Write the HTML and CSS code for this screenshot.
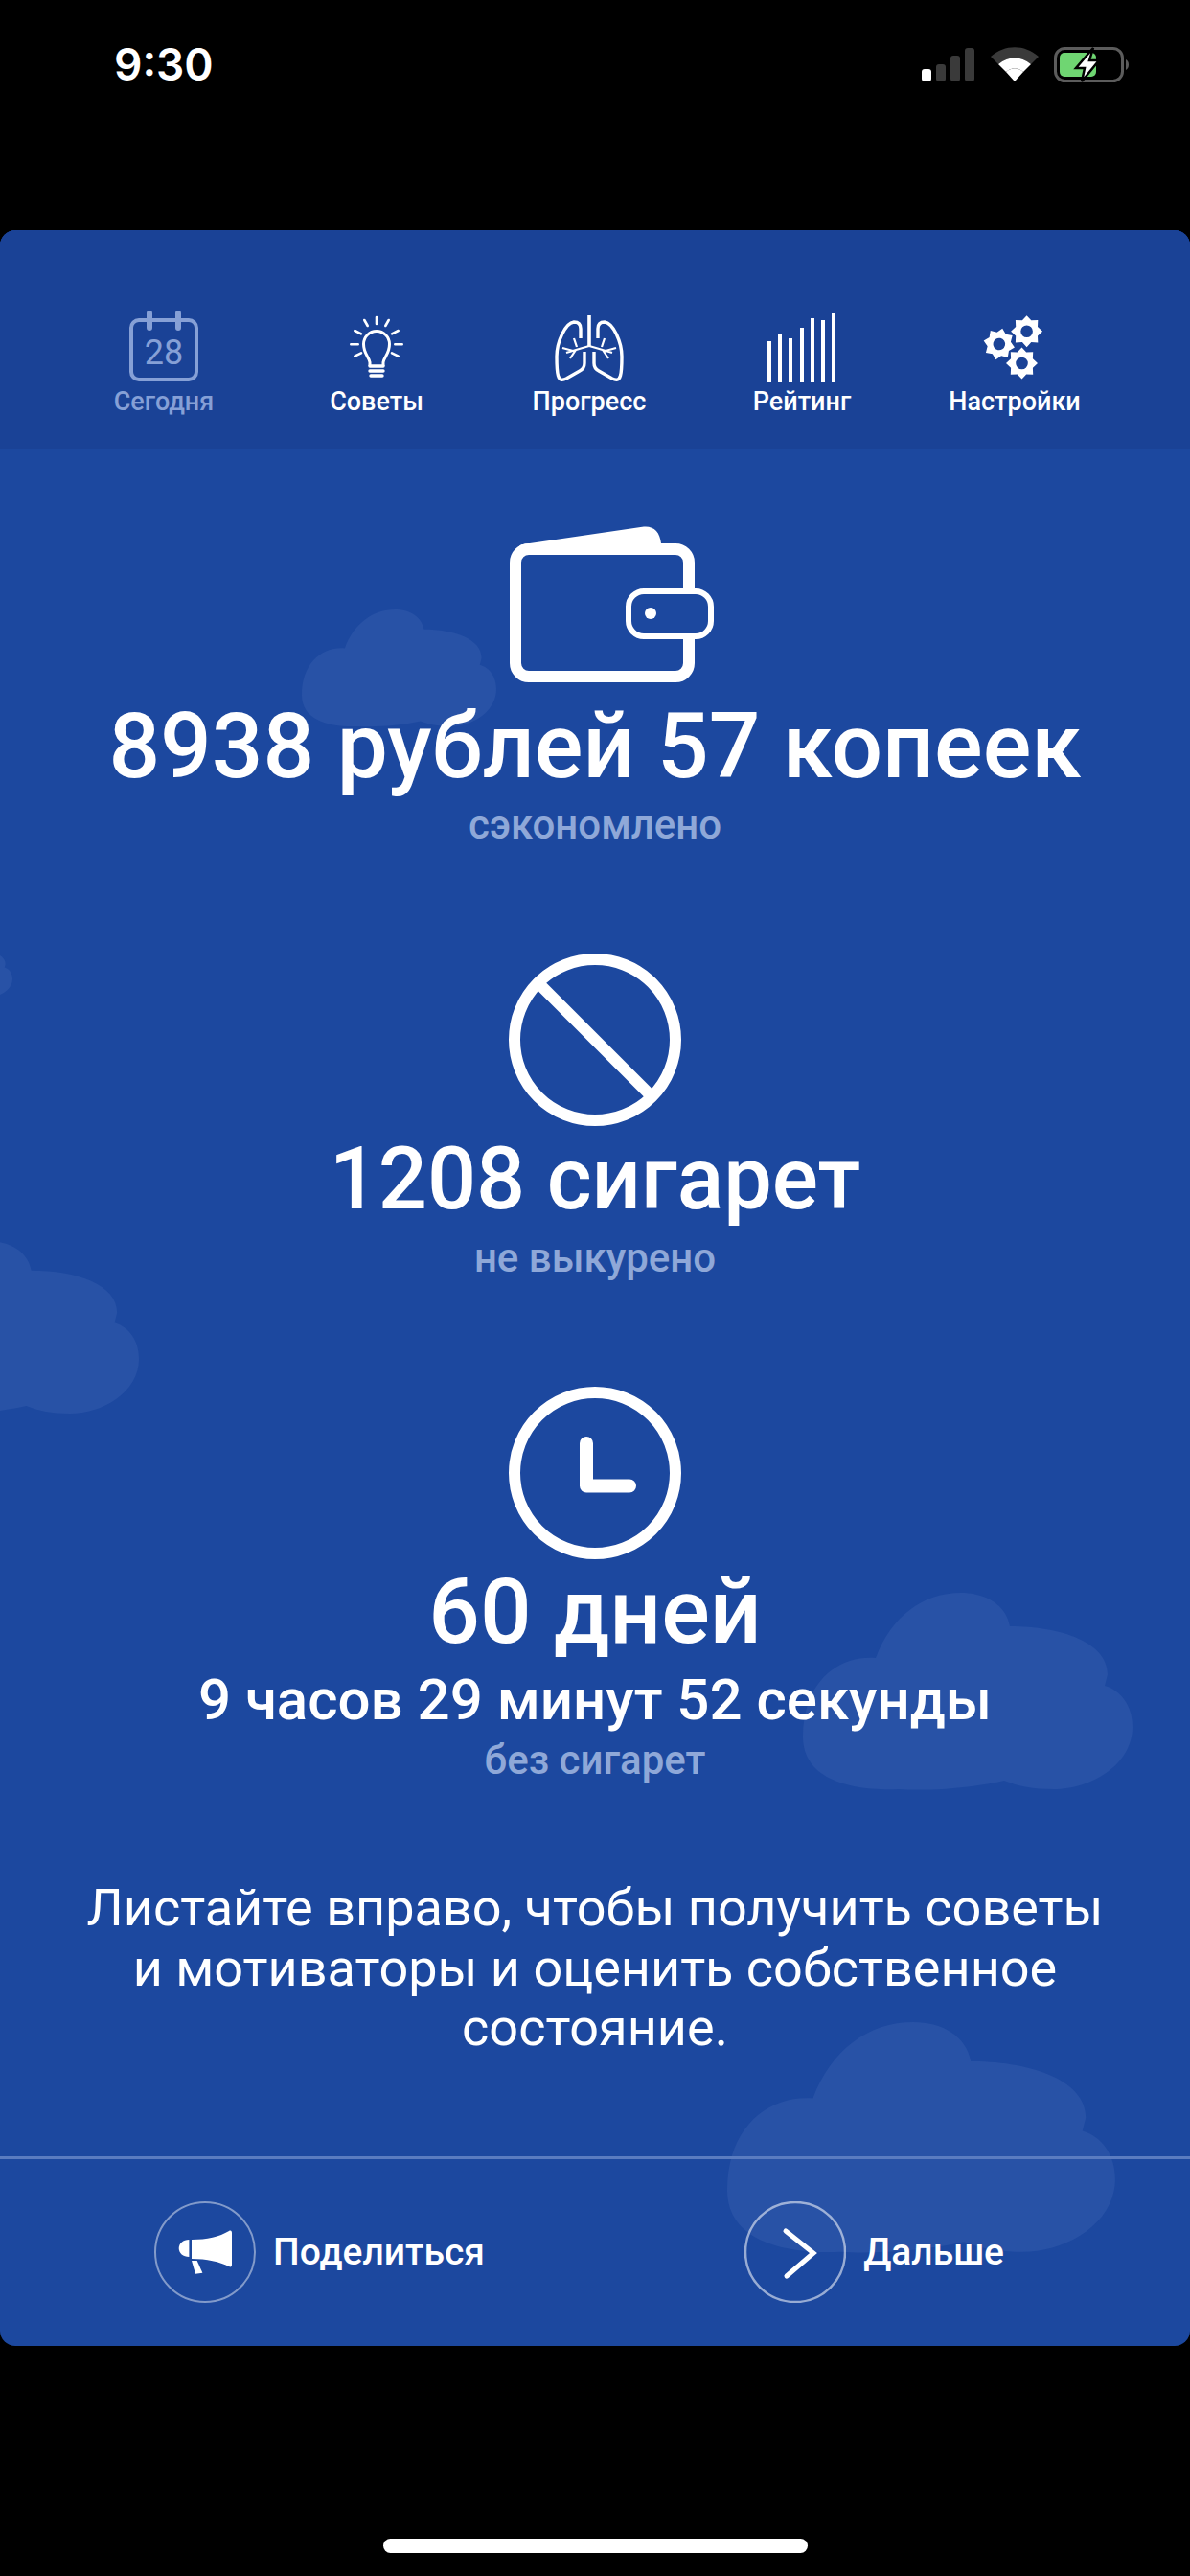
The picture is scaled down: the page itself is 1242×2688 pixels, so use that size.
FILE: index.html
```html
<!DOCTYPE html>
<html lang="ru">
<head>
    <meta charset="UTF-8">
    <title>Сегодня</title>
    <link rel="stylesheet" href="styles.css">
</head>
<body>
    <div class="status-bar">
        <span class="time">9:30</span>
        <svg class="status-icons" width="230" height="50" viewBox="950 45 230 50">
            <rect x="960" y="72" width="10" height="13" rx="3" fill="#fff"/>
            <rect x="975" y="67" width="10" height="18" rx="3" fill="#3a3a3a"/>
            <rect x="990" y="58" width="10" height="27" rx="3" fill="#3a3a3a"/>
            <rect x="1005" y="50" width="10" height="35" rx="3" fill="#3a3a3a"/>
            <path d="M1032 59 C1047 46 1067 46 1082 59 L1074 67 C1063 58 1051 58 1040 67Z" fill="#3a3a3a"/>
            <path d="M1040 67 C1051 58 1063 58 1074 67 L1066 75 C1060 70 1054 70 1048 75Z" fill="#fff"/>
            <path d="M1048 75 C1054 70 1060 70 1066 75 L1057 85Z" fill="#fff"/>
            <rect x="1099.5" y="50.5" width="70" height="34" rx="10" fill="none" stroke="#5c5c5c" stroke-width="3"/>
            <path d="M1173 62 C1177 64 1177 71 1173 73Z" fill="#5c5c5c"/>
            <rect x="1104" y="55" width="38" height="25" rx="5" fill="#6fd672"/>
            <path d="M1139 50 L1121 71 L1130 71 L1127 85 L1145 63 L1135 63Z" fill="#fff" stroke="#000" stroke-width="2.5"/>
        </svg>
    </div>

    <div class="card">
        <svg class="clouds" width="1242" height="2208" viewBox="0 0 1242 2208">
            <defs>
                <path id="cloud" d="M0 150 C0 95 35 65 76 68 C92 25 125 0 165 0 C190 0 212 12 216 35 C270 35 318 52 318 85 L315 97 C332 102 344 118 344 140 C344 180 300 205 262 205 C240 205 225 202 210 196 C175 204 130 207 100 205 C50 207 0 195 0 150Z"/>
            </defs>
            <use href="#cloud" transform="translate(315 396) scale(.59 .595)"/>
            <use href="#cloud" transform="translate(-157 1055) scale(.878 .878)"/>
            <use href="#cloud" transform="translate(-84 742) scale(.282 .283)"/>
            <use href="#cloud" transform="translate(838 1422)"/>
            <use href="#cloud" transform="translate(759 1870) scale(1.177 1.17)"/>
        </svg>

        <nav class="tabs">
            <div class="tab tab-active">
                <svg class="tab-icon" width="100" height="76" viewBox="0 0 100 76">
                    <rect class="line" x="16" y="9" width="68" height="62" rx="8" stroke-width="4"/>
                    <path class="line" d="M35 2 V17 M65 2 V17" stroke-width="6" stroke-linecap="round"/>
                    <text class="cal-day" x="50" y="55">28</text>
                </svg>
                <span>Сегодня</span>
            </div>
            <div class="tab">
                <svg class="tab-icon" width="100" height="76" viewBox="0 0 100 76">
                    <path class="line" d="M43 57 V53 C42 47 36.5 44 36.5 34 A13.5 13.5 0 0 1 63.5 34 C63.5 44 58 47 57 53 V57" stroke-width="3"/>
                    <path class="line" d="M43 57 H57 M43 62 H57 M44 67 H56" stroke-width="3.4" stroke-linecap="round"/>
                    <path class="line" d="M50 6 V13 M37.3 9 L40.7 15 M62.7 9 L59.3 15 M27.3 20 L34 23.3 M72.7 20 L66 23.3 M23.3 34.3 H30.7 M76.7 34.3 H69.3 M27.3 46.7 L34 43.3 M72.7 46.7 L66 43.3" stroke-width="2.6" stroke-linecap="round"/>
                </svg>
                <span>Советы</span>
            </div>
            <div class="tab">
                <svg class="tab-icon" width="100" height="76" viewBox="0 0 100 76">
                    <g id="lung">
                        <path class="line" d="M41 28 V18 C41 13 38 11 34 11 C25 12 16 32 16 47 C16 55 16 62 17.5 67 C19 72 22 72 26 70 L40 62 C44 60 45 57 45 54 V42" stroke-width="3.4"/>
                        <path class="line" d="M50 36 L43 38 L26 43 M34 28 L37 37 M36 40 L30 49 M33 41 L22 38" stroke-width="2.2"/>
                    </g>
                    <use href="#lung" transform="matrix(-1 0 0 1 100 0)"/>
                    <path class="line" d="M50 4 V36" stroke-width="3.6"/>
                </svg>
                <span>Прогресс</span>
            </div>
            <div class="tab">
                <svg class="tab-icon" width="100" height="76" viewBox="0 0 100 76">
                    <path class="line" d="M16 31 V74 M27 24 V74 M38 28 V74 M50 17 V74 M61 7 V74 M72 9 V74 M83 2 V74" stroke-width="4"/>
                </svg>
                <span>Рейтинг</span>
            </div>
            <div class="tab">
                <svg class="tab-icon" width="100" height="76" viewBox="0 0 100 76">
                    <defs>
                        <path id="gear" fill-rule="evenodd" d="M16.5 0 L11.4 4.7 L11.7 11.7 L4.7 11.4 L0 16.5 L-4.7 11.4 L-11.7 11.7 L-11.4 4.7 L-16.5 0 L-11.4 -4.7 L-11.7 -11.7 L-4.7 -11.4 L0 -16.5 L4.7 -11.4 L11.7 -11.7 L11.4 -4.7Z M6.3 0 A6.3 6.3 0 1 0 -6.3 0 A6.3 6.3 0 1 0 6.3 0Z"/>
                    </defs>
                    <use class="solid" href="#gear" transform="translate(33.8 34) rotate(12)"/>
                    <use class="solid" href="#gear" transform="translate(62.6 20.7)"/>
                    <use class="solid" href="#gear" transform="translate(57.5 54)"/>
                </svg>
                <span>Настройки</span>
            </div>
        </nav>

        <main class="stats">
            <svg class="wallet" width="213" height="163" viewBox="0 0 213 163">
                <rect class="line" x="6" y="24" width="181" height="133" rx="14" stroke-width="12"/>
                <path class="solid" d="M8 24 C9 21 11 19 14 19 L140 .5 C150 -.5 157 6 158 18 V28 H8Z"/>
                <rect class="clasp" x="124" y="68" width="86" height="47" rx="16"/>
                <circle class="solid" cx="147" cy="91" r="6"/>
            </svg>
            <h2 class="big first">8938 рублей 57 копеек</h2>
            <p class="sub">сэкономлено</p>

            <svg class="round-icon" width="180" height="180" viewBox="0 0 180 180">
                <circle class="line" cx="90" cy="90" r="84" stroke-width="12"/>
                <path class="line" d="M31 31 L149 149" stroke-width="12"/>
            </svg>
            <h2 class="big big-small">1208 сигарет</h2>
            <p class="sub">не выкурено</p>

            <svg class="round-icon" width="180" height="180" viewBox="0 0 180 180">
                <circle class="line" cx="90" cy="90" r="84" stroke-width="12"/>
                <path class="line" d="M81 59 V103.5 H126" stroke-width="14" stroke-linecap="round" stroke-linejoin="round"/>
            </svg>
            <h2 class="big">60 дней</h2>
            <h3 class="medium">9 часов 29 минут 52 секунды</h3>
            <p class="sub sub-tight">без сигарет</p>

            <p class="hint">Листайте вправо, чтобы получить советы<br>и мотиваторы и оценить собственное<br>состояние.</p>
        </main>

        <footer class="actions">
            <div class="action">
                <svg class="action-icon" width="106" height="106" viewBox="0 0 106 106">
                    <circle class="ring" cx="53" cy="53" r="52"/>
                    <path class="solid" d="M39 40 C55 40 68 37 78 31 C80 30 81 31 81 33 V66 C81 68 80 69 78 68 C68 63 55 60 39 60Z"/>
                    <path class="solid" d="M36.4 40 C30 40 25.7 44 25.7 49 C25.7 54 30 58 36.4 58Z"/>
                    <path class="solid" d="M39 62 H44.7 L50.4 74.7 L43 75.7Z"/>
                </svg>
                <span>Поделиться</span>
            </div>
            <div class="action">
                <svg class="action-icon" width="106" height="106" viewBox="0 0 106 106">
                    <circle class="ring ring-strong" cx="53" cy="53" r="52"/>
                    <path class="line" d="M43 31 L72 54 L44 78" stroke-width="5" stroke-linecap="round" stroke-linejoin="miter"/>
                </svg>
                <span>Дальше</span>
            </div>
        </footer>
    </div>

    <div class="home-area">
        <div class="home-bar"></div>
    </div>
</body>
</html>
```

FILE: styles.css
```css
body {
    margin: 0;
    width: 1242px;
    height: 2688px;
    background-color: #000;
    color: #fff;
    font-family: Roboto, "Noto Sans", sans-serif;
    overflow: hidden;
}

.status-bar {
    height: 240px;
    box-sizing: border-box;
    padding: 40px 60px 0 119px;
    display: flex;
    justify-content: space-between;
    align-items: flex-start;
}

.time {
    font-family: Inter, Roboto, sans-serif;
    font-size: 46px;
    font-weight: 600;
    line-height: 54px;
}

.status-icons {
    display: block;
    margin-top: 5px;
}

.card {
    position: relative;
    height: 2208px;
    display: flex;
    flex-direction: column;
    background-color: #1c489f;
    border-radius: 16px;
    overflow: hidden;
}

.clouds {
    position: absolute;
    top: 0;
    left: 0;
    fill: #2852a6;
}

.line {
    fill: none;
    stroke: #fff;
}

.solid {
    fill: #fff;
}

.tabs {
    position: relative;
    height: 228px;
    box-sizing: border-box;
    padding: 85px 72px 0 60px;
    display: grid;
    grid-template-columns: repeat(5, 1fr);
    background-color: #1a4296;
}

.tab {
    display: flex;
    flex-direction: column;
    align-items: center;
    padding-top: 2px;
    font-size: 27px;
    font-weight: 500;
    line-height: 32px;
}

.tab-icon {
    display: block;
    height: 76px;
    margin-top: -2px;
    margin-bottom: 2px;
}

.tab-active {
    color: #86a0d6;
}

.tab-active .line {
    stroke: #86a0d6;
}

.cal-day {
    fill: #86a0d6;
    font-family: Roboto, sans-serif;
    font-size: 36px;
    font-weight: 400;
    text-anchor: middle;
}

.stats {
    position: relative;
    flex: 1;
    display: flex;
    flex-direction: column;
    align-items: center;
    padding-top: 81px;
    text-align: center;
}

.wallet,
.round-icon {
    display: block;
    flex: none;
}

.wallet {
    margin-left: 34px;
}

.clasp {
    fill: #1c489f;
    stroke: #fff;
    stroke-width: 6;
}

.round-icon {
    margin-top: 109px;
}

.big {
    margin: 5px 0 0;
    font-size: 94.5px;
    font-weight: 500;
    line-height: 100px;
}

.big.first {
    margin-top: 17px;
}

.big-small {
    margin-top: 6px;
    font-size: 90px;
}

.medium {
    margin: 7px 0 0;
    font-size: 60px;
    font-weight: 500;
    line-height: 70px;
}

.sub {
    margin: 7px 0 0;
    color: #8fa8d8;
    font-size: 42px;
    font-weight: 500;
    line-height: 50px;
}

.sub-tight {
    margin-top: 3px;
}

.hint {
    margin: 98px 0 0;
    font-size: 54px;
    font-weight: 400;
    line-height: 62.5px;
}

.actions {
    position: relative;
    height: 198px;
    box-sizing: border-box;
    padding: 44px 194px 0 161px;
    display: flex;
    justify-content: space-between;
    align-items: flex-start;
    border-top: 3px solid #5a7cc0;
}

.action {
    display: flex;
    align-items: center;
    gap: 18px;
    font-size: 39px;
    font-weight: 500;
}

.action-icon {
    display: block;
}

.ring {
    fill: none;
    stroke: #fff;
    stroke-opacity: 0.45;
    stroke-width: 2;
}

.ring-strong {
    stroke-opacity: 0.55;
    stroke-width: 2.5;
}

.home-area {
    height: 240px;
    display: flex;
    justify-content: center;
    padding-top: 201px;
    box-sizing: border-box;
}

.home-bar {
    width: 443px;
    height: 15px;
    border-radius: 8px;
    background-color: #fff;
}
```
